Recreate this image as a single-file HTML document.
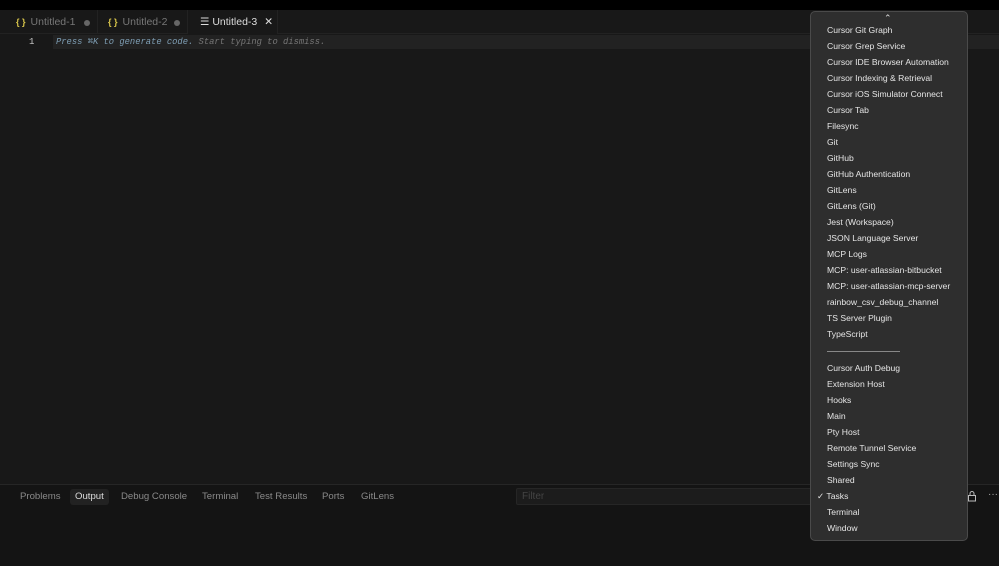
<!DOCTYPE html>
<html><head><style>
*{margin:0;padding:0;box-sizing:border-box}
body{width:999px;height:566px;background:#181818;overflow:hidden;position:relative;font-family:"Liberation Sans",sans-serif;}
.top{position:absolute;left:0;top:0;width:999px;height:10px;background:#000}
.tabs{position:absolute;left:0;top:10px;width:999px;height:24px;background:#181818;border-bottom:1px solid #222}
.tab{position:absolute;top:0;height:24px;font-size:10.5px;line-height:25px;color:#777;border-right:1px solid #222;padding-left:16px}
.tab b{color:#d7c44a;font-weight:bold;font-size:9px;margin-right:5px}
.dot{position:absolute;top:10px;width:6px;height:6px;border-radius:3px;background:#666}
.line{position:absolute;left:53px;top:35px;width:946px;height:14px;background:#222}
.ln{position:absolute;left:29px;top:35px;font:9px "Liberation Mono",monospace;line-height:14px;color:#ccc}
.ghost{position:absolute;left:56px;top:35px;font:italic 8.8px "Liberation Mono",monospace;line-height:14px;color:#777}
.ghost span{color:#7f9fb5}
.panel{position:absolute;left:0;top:484px;width:999px;height:82px;background:#141414;border-top:1px solid #262626}
.pt{position:absolute;font-size:9.6px;line-height:16px;color:#8a8a8a}
.pt.act{color:#ddd;background:#222;padding:0 5px;border-radius:3px}
.filter{position:absolute;left:516px;top:488px;width:300px;height:17px;background:#1c1c1c;border:1px solid #262626;border-radius:2px;font-size:10px;color:#444;padding-left:5px;line-height:15px}
.menu{position:absolute;left:810px;top:11px;width:158px;height:530px;background:#2e2e2e;border:1px solid #4a4a4a;border-radius:5px;overflow:hidden}
.mi{position:absolute;left:16px;font-size:8.6px;color:#e6e6e6;line-height:12px;white-space:nowrap}
</style></head><body>
<div class="top"></div>
<div class="tabs">
<div class="tab" style="left:0;width:98px"><b>{ }</b>Untitled-1</div><div class="dot" style="left:84px"></div>
<div class="tab" style="left:98px;width:90px;padding-left:10px"><b>{ }</b>Untitled-2</div><div class="dot" style="left:174px"></div>
<div class="tab" style="left:188px;width:90px;padding-left:12px;color:#ddd;background:#181818">☰ Untitled-3 <span style="margin-left:4px">✕</span></div>
</div>
<div class="line"></div>
<div class="ln">1</div>
<div class="ghost"><span>Press ⌘K to generate code.</span> Start typing to dismiss.</div>
<div class="panel"></div>
<div class="pt" style="left:20px;top:489px">Problems</div>
<div class="pt act" style="left:70px;top:489px">Output</div>
<div class="pt" style="left:121px;top:489px">Debug Console</div>
<div class="pt" style="left:202px;top:489px">Terminal</div>
<div class="pt" style="left:255px;top:489px">Test Results</div>
<div class="pt" style="left:322px;top:489px">Ports</div>
<div class="pt" style="left:361px;top:489px">GitLens</div>
<div class="filter">Filter</div>
<svg style="position:absolute;left:967px;top:490px" width="10" height="12" viewBox="0 0 10 12"><rect x="1.5" y="5.5" width="7" height="5.5" fill="none" stroke="#bbb"/><path d="M3 5.5V3.5a2 2 0 0 1 4 0v2" fill="none" stroke="#bbb"/></svg>
<div style="position:absolute;left:988px;top:489px;font-size:10px;color:#aaa">···</div>
<div class="menu">
<div style="position:absolute;left:73px;top:1px;font-size:9px;color:#ddd">⌃</div>
<div class="mi" style="top:12px;clip-path:inset(3px 0 0 0)">Cursor Git Graph</div>
<div class="mi" style="top:28px">Cursor Grep Service</div>
<div class="mi" style="top:44px">Cursor IDE Browser Automation</div>
<div class="mi" style="top:60px">Cursor Indexing &amp; Retrieval</div>
<div class="mi" style="top:76px">Cursor iOS Simulator Connect</div>
<div class="mi" style="top:92px">Cursor Tab</div>
<div class="mi" style="top:108px">Filesync</div>
<div class="mi" style="top:124px">Git</div>
<div class="mi" style="top:140px">GitHub</div>
<div class="mi" style="top:156px">GitHub Authentication</div>
<div class="mi" style="top:172px">GitLens</div>
<div class="mi" style="top:188px">GitLens (Git)</div>
<div class="mi" style="top:204px">Jest (Workspace)</div>
<div class="mi" style="top:220px">JSON Language Server</div>
<div class="mi" style="top:236px">MCP Logs</div>
<div class="mi" style="top:252px">MCP: user-atlassian-bitbucket</div>
<div class="mi" style="top:268px">MCP: user-atlassian-mcp-server</div>
<div class="mi" style="top:284px">rainbow_csv_debug_channel</div>
<div class="mi" style="top:300px">TS Server Plugin</div>
<div class="mi" style="top:316px">TypeScript</div>
<div style="position:absolute;left:16px;top:339px;width:73px;height:1px;background:#888"></div>
<div class="mi" style="top:350px">Cursor Auth Debug</div>
<div class="mi" style="top:366px">Extension Host</div>
<div class="mi" style="top:382px">Hooks</div>
<div class="mi" style="top:398px">Main</div>
<div class="mi" style="top:414px">Pty Host</div>
<div class="mi" style="top:430px">Remote Tunnel Service</div>
<div class="mi" style="top:446px">Settings Sync</div>
<div class="mi" style="top:462px">Shared</div>
<div class="mi" style="top:478px;left:6px">✓ Tasks</div>
<div class="mi" style="top:494px">Terminal</div>
<div class="mi" style="top:510px">Window</div>
</div>
</body></html>
